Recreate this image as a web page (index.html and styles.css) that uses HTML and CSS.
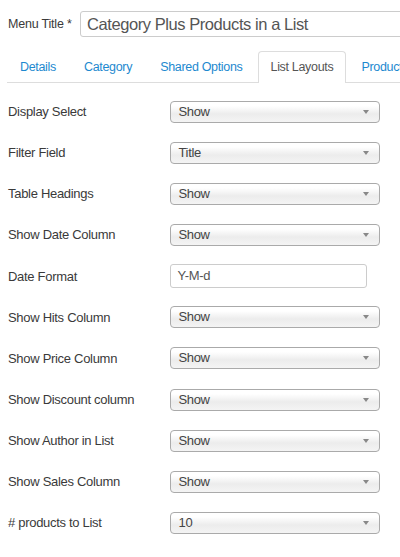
FILE: index.html
```html
<!DOCTYPE html>
<html>
<head>
<meta charset="utf-8">
<link rel="stylesheet" href="styles.css">
</head>
<body>
<div class="page">
  <div class="title-row">
    <label class="title-label">Menu Title *</label>
    <div class="title-input">Category Plus Products in a List</div>
  </div>
  <ul class="tabs">
    <li class="tab">Details</li>
    <li class="tab">Category</li>
    <li class="tab">Shared Options</li>
    <li class="tab active">List Layouts</li>
    <li class="tab">Product Layouts</li>
  </ul>
  <div class="form">
    <div class="row"><span class="label">Display Select</span><div class="select">Show<span class="caret"></span></div></div>
    <div class="row"><span class="label">Filter Field</span><div class="select">Title<span class="caret"></span></div></div>
    <div class="row"><span class="label">Table Headings</span><div class="select">Show<span class="caret"></span></div></div>
    <div class="row"><span class="label">Show Date Column</span><div class="select">Show<span class="caret"></span></div></div>
    <div class="row"><span class="label">Date Format</span><div class="text">Y-M-d</div></div>
    <div class="row"><span class="label">Show Hits Column</span><div class="select">Show<span class="caret"></span></div></div>
    <div class="row"><span class="label">Show Price Column</span><div class="select">Show<span class="caret"></span></div></div>
    <div class="row"><span class="label">Show Discount column</span><div class="select">Show<span class="caret"></span></div></div>
    <div class="row"><span class="label">Show Author in List</span><div class="select">Show<span class="caret"></span></div></div>
    <div class="row"><span class="label">Show Sales Column</span><div class="select">Show<span class="caret"></span></div></div>
    <div class="row"><span class="label"># products to List</span><div class="select">10<span class="caret"></span></div></div>
  </div>
</div>
</body>
</html>
```
FILE: styles.css
```css
html, body {
  margin: 0;
  padding: 0;
  background: #fff;
  overflow: hidden;
}
.page {
  width: 400px;
  height: 557px;
  overflow: hidden;
  font-family: "Liberation Sans", Arial, sans-serif;
  color: #3a3a3a;
}
.title-row {
  display: flex;
  align-items: center;
  padding: 11px 0 0 8px;
  white-space: nowrap;
}
.title-label {
  font-size: 12.5px;
  letter-spacing: -0.2px;
  width: 72px;
  flex: none;
  color: #3a3a3a;
}
.title-input {
  flex: none;
  width: 340px;
  height: 24px;
  border: 1px solid #ccc;
  border-radius: 3px;
  box-sizing: content-box;
  font-size: 16.5px;
  letter-spacing: -0.43px;
  line-height: 25px;
  padding: 0 6px;
  color: #555;
}
.tabs {
  list-style: none;
  margin: 14px 0 0 7px;
  padding: 0;
  display: flex;
  border-bottom: 1px solid #ddd;
  white-space: nowrap;
  width: 420px;
}
.tab {
  flex: none;
  font-size: 12.5px;
  letter-spacing: -0.32px;
  color: #1d89cf;
  padding: 0 12px;
  margin-right: 2px;
  height: 30px;
  line-height: 31px;
  border: 1px solid transparent;
  border-bottom: 0;
  border-radius: 4px 4px 0 0;
  margin-bottom: -1px;
}
.tab.active {
  color: #555;
  border-color: #ddd;
  background: #fff;
  height: 31px;
}
.form {
  padding: 8px 0 0 8px;
}
.row {
  display: flex;
  align-items: center;
  height: 41.15px;
}
.label {
  width: 161.5px;
  flex: none;
  font-size: 13px;
  letter-spacing: -0.3px;
  color: #3a3a3a;
}
.select {
  position: relative;
  height: 20px;
  line-height: 20px;
  border: 1px solid #aaa;
  border-radius: 4px;
  background: linear-gradient(#fff 20%, #ececec 60%, #f4f4f4);
  font-size: 13px;
  letter-spacing: -0.35px;
  color: #444;
  padding-left: 8px;
  box-sizing: content-box;
  width: 200px;
}
.caret {
  position: absolute;
  right: 10px;
  top: 8px;
  width: 0;
  height: 0;
  border-left: 3px solid transparent;
  border-right: 3px solid transparent;
  border-top: 4px solid #888;
}
.text {
  width: 188px;
  height: 22px;
  line-height: 22px;
  border: 1px solid #ccc;
  border-radius: 3px;
  padding-left: 7px;
  font-size: 13px;
  letter-spacing: -0.3px;
  color: #555;
}
```
